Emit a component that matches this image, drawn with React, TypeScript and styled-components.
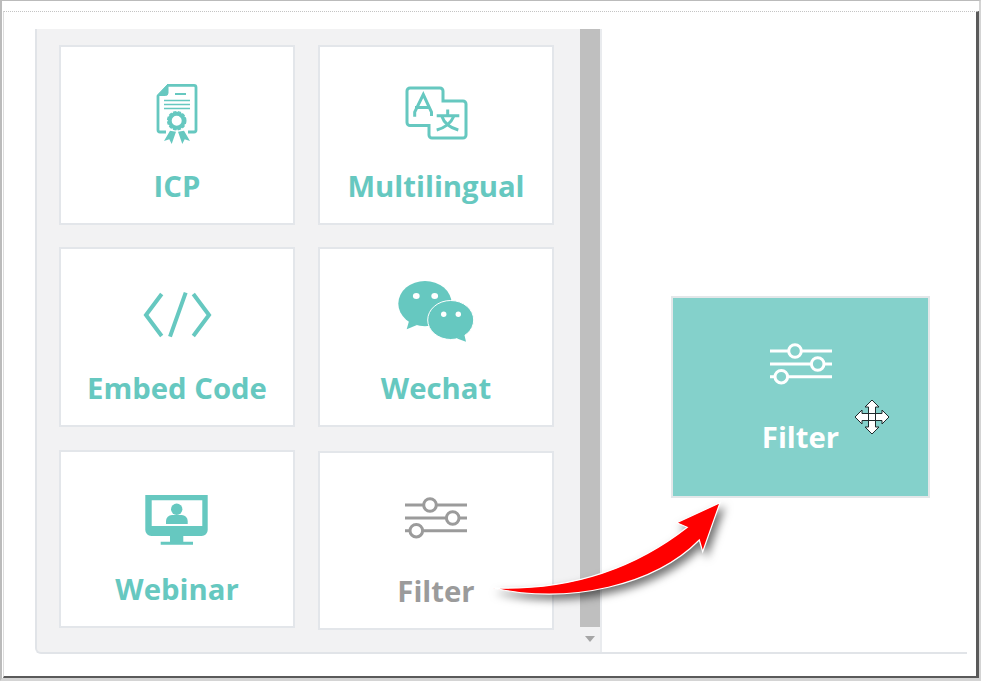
import React from 'react';
import styled, { createGlobalStyle } from 'styled-components';

const TEAL = '#66c8c0';
const GREY = '#9b9b9b';

const GlobalStyle = createGlobalStyle`
  html, body {
    margin: 0;
    background: #ffffff;
  }

  body {
    font-family: "Open Sans", "Liberation Sans", sans-serif;
  }
`;

const Shot = styled.div`
  background: #ffffff;
  border-left: 2px solid #bbbbbb;
  border-top: 1px solid #bbbbbb;
  border-right: 2px solid #d4d4d4;
  border-bottom: 3px solid #d4d4d4;
  box-sizing: border-box;
  height: 681px;
  padding: 10px 0 0 1px;
  width: 981px;
`;

const Frame = styled.div`
  background: #ffffff;
  border-top: 1px dotted #c4c4c4;
  border-left: 1px solid #dddddd;
  border-right: 3px solid #5a5a5a;
  border-bottom: 2px solid #5a5a5a;
  box-sizing: border-box;
  height: 667px;
  padding: 17px 0 0 31px;
  width: 976px;
`;

const Workspace = styled.div`
  display: flex;
  height: 625px;
  position: relative;
  width: 932px;
`;

const Palette = styled.div`
  background: #f2f2f3;
  border-left: 2px solid #e1e4e8;
  border-bottom: 2px solid #e1e4e8;
  border-bottom-left-radius: 6px;
  box-sizing: border-box;
  display: flex;
  height: 625px;
  justify-content: space-between;
  width: 567px;
`;

const CardGrid = styled.div`
  display: grid;
  grid-template-columns: 236px 236px;
  grid-template-rows: 202px 203px 180px;
  column-gap: 23px;
  padding: 16px 0 0 22px;
`;

const Card = styled.div<{ $height?: number; $shift?: number }>`
  align-items: center;
  background: #ffffff;
  border: 2px solid #e3e6ea;
  box-sizing: border-box;
  display: flex;
  flex-direction: column;
  height: ${(props) => props.$height ?? 180}px;
  margin-top: ${(props) => props.$shift ?? 0}px;
  padding-top: 28px;
`;

const Label = styled.span<{ $color: string; $lift?: number }>`
  color: ${(props) => props.$color};
  font-size: 29.3px;
  font-weight: 700;
  line-height: 36px;
  margin-top: ${(props) => 13 - (props.$lift ?? 0)}px;
  white-space: nowrap;
`;

const ScrollRail = styled.div`
  align-items: center;
  border-right: 2px solid #e9ebee;
  display: flex;
  flex-direction: column;
  width: 20px;
`;

const ScrollThumb = styled.div`
  background: #bfbfbf;
  height: 598px;
  width: 100%;
`;

const ScrollArrow = styled.div`
  border-left: 5px solid transparent;
  border-right: 5px solid transparent;
  border-top: 6px solid #a6a6a6;
  height: 0;
  margin-top: 9px;
  width: 0;
`;

const DropZone = styled.div`
  border-bottom: 2px solid #e1e4e8;
  box-sizing: border-box;
  flex: 1;
  height: 625px;
  padding: 267px 0 0 69px;
`;

const FloatCard = styled.div`
  align-items: center;
  background: #84d1cb;
  border: 2px solid #e3e7e9;
  box-sizing: border-box;
  display: flex;
  flex-direction: column;
  height: 202px;
  padding-top: 29px;
  position: relative;
  width: 259px;
`;

const CursorIcon = styled.svg`
  height: 36px;
  left: 181px;
  position: absolute;
  top: 101px;
  width: 36px;
`;

const ArrowIcon = styled.svg`
  filter: drop-shadow(4px 5px 4px rgba(0, 0, 0, 0.55));
  height: 110px;
  left: 455px;
  overflow: visible;
  position: absolute;
  top: 466px;
  width: 240px;
`;

const IconBox = styled.svg`
  display: block;
  flex: none;
  height: 80px;
  width: 80px;
`;

function IcpIcon() {
  return (
    <IconBox viewBox="0 0 80 80" fill="none" stroke={TEAL} strokeWidth="2.8">
      <path d="M30 10.4H57a2 2 0 0 1 2 2V55a2 2 0 0 1-2 2H51M29 57H23a2 2 0 0 1-2-2V21" />
      <path d="M20 20.5 31 9v9a2.5 2.5 0 0 1-2.5 2.5Z" fill={TEAL} strokeWidth="1" />
      <path d="M38 19H49" strokeWidth="2" />
      <path d="M27 25.5H53M27 29.5H53M27 33.5H53" strokeWidth="1.7" />
      <circle cx="39.7" cy="45.7" r="7" strokeWidth="4" />
      <circle cx="39.7" cy="45.7" r="9" strokeWidth="1.6" strokeDasharray="3.4 1.4" />
      <path d="M33 55.7 39 56.7 34.7 69 32.3 64.3 27 66ZM47 55.7 41 56.7 45.3 69 47.7 64.3 53 66Z" fill={TEAL} stroke="none" />
    </IconBox>
  );
}

function TranslateIcon() {
  return (
    <IconBox viewBox="0 0 80 80" fill="none" stroke={TEAL} strokeWidth="3">
      <path d="M14 13H44a3 3 0 0 1 3 3V26H67a3 3 0 0 1 3 3V60a3 3 0 0 1-3 3H36a3 3 0 0 1-3-3V50.5H14a3 3 0 0 1-3-3V16a3 3 0 0 1 3-3Z" />
      <path d="M18.7 41.7V37L27.3 19.5 35.5 37V41M19 32.5H34" />
      <path d="M51.7 34.5V40.7M40.7 40.7H63.3M45.7 41C48 48 55 53 62.3 55M58 41C55 48 48 53 40.7 55" />
    </IconBox>
  );
}

function CodeIcon() {
  return (
    <IconBox viewBox="0 0 80 80" fill="none" stroke={TEAL} strokeWidth="4">
      <path d="M24.7 17 9 38 24.7 59M56.3 17 72 38 56.3 59M48.7 15.7 33 59.7" />
    </IconBox>
  );
}

function WechatIcon() {
  return (
    <IconBox viewBox="0 0 80 80" fill={TEAL}>
      <ellipse cx="29" cy="26.6" rx="26.7" ry="22.7" />
      <path d="M13.3 43 10.7 52.3 21 48Z" />
      <ellipse cx="20.3" cy="19" rx="3.4" ry="3" fill="#ffffff" />
      <ellipse cx="38.7" cy="19" rx="3.4" ry="3" fill="#ffffff" />
      <ellipse cx="54.7" cy="43" rx="23" ry="19.5" stroke="#ffffff" strokeWidth="1" />
      <path d="M61 61.5 70 64.7 68 56Z" />
      <circle cx="47.7" cy="37.3" r="2.7" fill="#ffffff" />
      <circle cx="62.3" cy="37.3" r="2.7" fill="#ffffff" />
    </IconBox>
  );
}

function WebinarIcon() {
  return (
    <IconBox viewBox="0 0 80 80" fill={TEAL}>
      <path fillRule="evenodd" d="M8.3 15H70.7V50a6 6 0 0 1-6 6H14.3a6 6 0 0 1-6-6ZM14.7 20.3V46H65.3V20.3Z" />
      <path d="M33 56H46.3V61.7H56V64.7H23.7V61.7H33Z" />
      <circle cx="39.7" cy="29.3" r="5.7" />
      <path d="M29 44V41a6 6 0 0 1 6-6H44.7a6 6 0 0 1 6 6V44Z" />
    </IconBox>
  );
}

function FilterIcon({ color, hole }: { color: string; hole: string }) {
  return (
    <IconBox viewBox="0 0 80 80" fill={hole} stroke={color} strokeWidth="3">
      <path d="M9 24H71M9 37H71M9 49.7H71" />
      <circle cx="34" cy="24" r="6.3" />
      <circle cx="56.7" cy="37" r="6.3" />
      <circle cx="20.3" cy="49.7" r="6.3" />
    </IconBox>
  );
}

export default function App() {
  return (
    <>
      <GlobalStyle />
      <Shot>
        <Frame>
          <Workspace>
            <Palette>
              <CardGrid>
                <Card>
                  <IcpIcon />
                  <Label $color={TEAL}>ICP</Label>
                </Card>
                <Card>
                  <TranslateIcon />
                  <Label $color={TEAL}>Multilingual</Label>
                </Card>
                <Card>
                  <CodeIcon />
                  <Label $color={TEAL}>Embed Code</Label>
                </Card>
                <Card>
                  <WechatIcon />
                  <Label $color={TEAL}>Wechat</Label>
                </Card>
                <Card $height={178}>
                  <WebinarIcon />
                  <Label $color={TEAL} $lift={2}>Webinar</Label>
                </Card>
                <Card $height={179} $shift={1}>
                  <FilterIcon color={GREY} hole="#ffffff" />
                  <Label $color={GREY} $lift={1}>Filter</Label>
                </Card>
              </CardGrid>
              <ScrollRail>
                <ScrollThumb />
                <ScrollArrow />
              </ScrollRail>
            </Palette>
            <DropZone>
              <FloatCard>
                <FilterIcon color="#ffffff" hole="#84d1cb" />
                <Label $color="#ffffff" $lift={1}>Filter</Label>
                <CursorIcon viewBox="0 0 36 36">
                  <path
                    d="M18 1 25 8H21.5V14.5H28V11L35 18 28 25V21.5H21.5V28H25L18 35 11 28H14.5V21.5H8V25L1 18 8 11V14.5H14.5V8H11Z"
                    fill="#ffffff"
                    stroke="#1f2a2c"
                    strokeWidth="1"
                  />
                  <path d="M14.5 8V28M21.5 8V28M8 14.5H28M8 21.5H28" stroke="#1f2a2c" strokeWidth="1" />
                </CursorIcon>
              </FloatCard>
            </DropZone>
            <ArrowIcon viewBox="0 0 240 110">
              <path
                d="M3 93C60 95 130 85 197.3 32.3L186.7 27.7 230 7.7 212.7 56.7 209.3 45C165 90 80 110 3 93Z"
                fill="#ff0000"
                stroke="#ffffff"
                strokeWidth="1.2"
              />
            </ArrowIcon>
          </Workspace>
        </Frame>
      </Shot>
    </>
  );
}
